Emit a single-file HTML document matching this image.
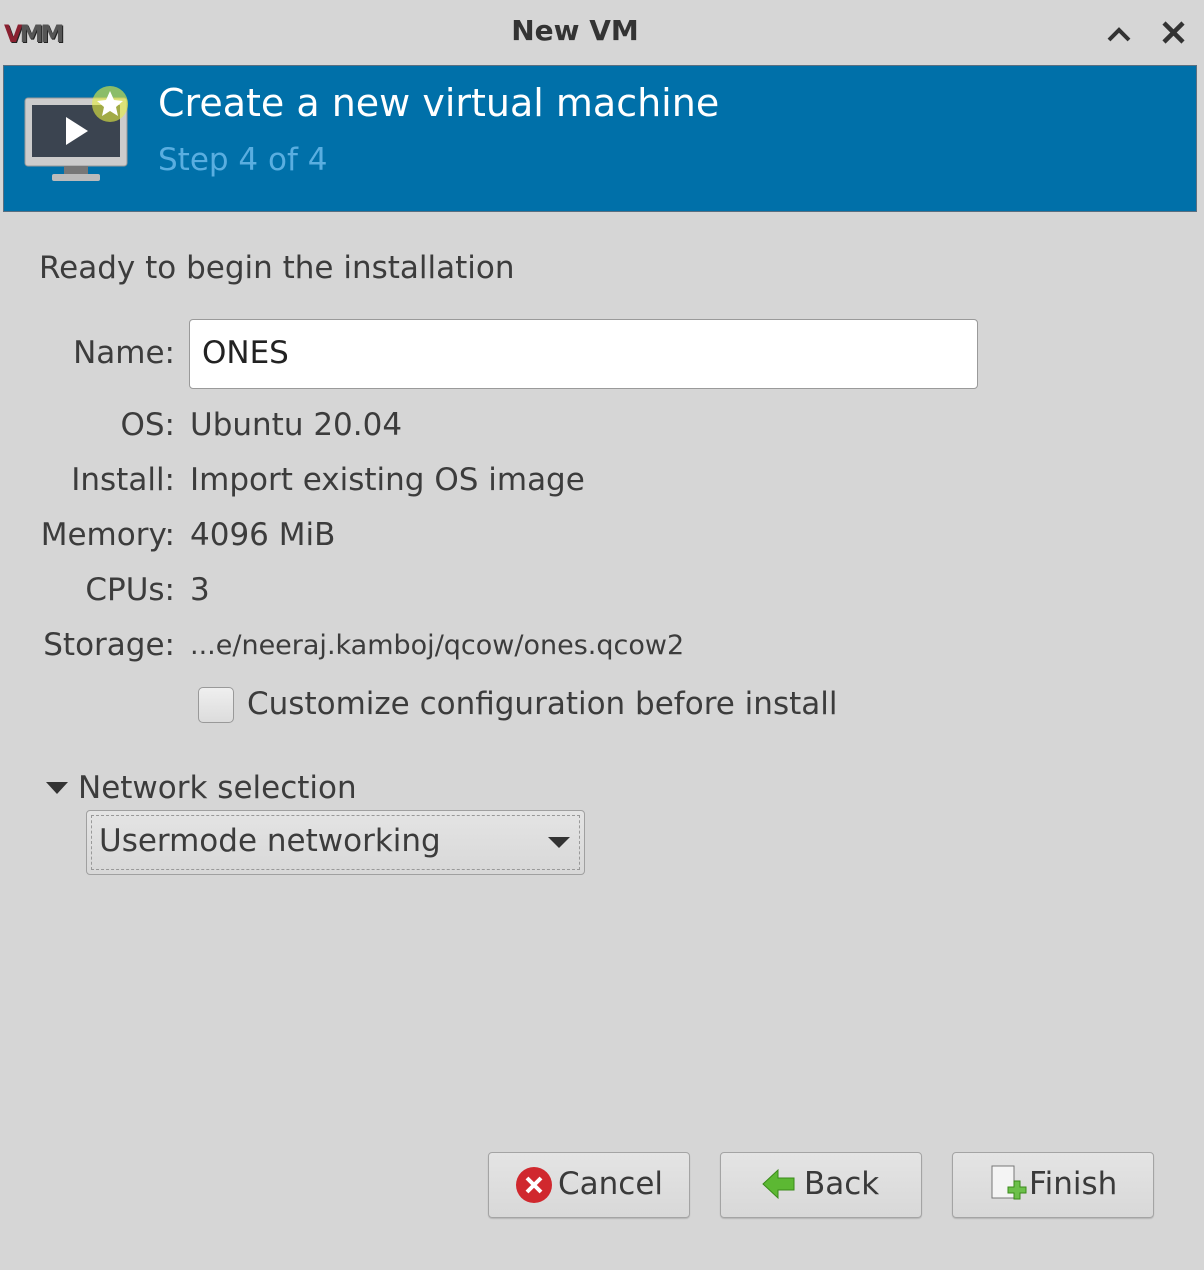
<!DOCTYPE html>
<html><head><meta charset="utf-8"><style>
html,body{margin:0;padding:0;}
body{width:1204px;height:1270px;background:#d6d6d6;position:relative;overflow:hidden;font-family:"DejaVu Sans","Liberation Sans",sans-serif;color:#3c3c3c;}
.a{position:absolute;white-space:nowrap;}
.lbl{position:absolute;right:1029px;white-space:nowrap;font-size:31px;line-height:36px;}
.val{position:absolute;left:190px;white-space:nowrap;font-size:31px;line-height:36px;}
.btn{position:absolute;top:1152px;width:200px;height:64px;border:1px solid #a4a4a4;border-radius:4px;background:linear-gradient(#e4e4e4,#d8d8d8);box-shadow:0 1px 1px rgba(0,0,0,.15);font-size:31px;line-height:62px;color:#3a3a3a;}
</style></head><body>
<div class="a" style="left:4px;top:20px;font-size:24px;font-weight:bold;color:#555;letter-spacing:-3px;text-shadow:1px 1px 0 #222;"><span style="color:#8a2030">V</span>MM</div>
<div class="a" style="left:0;width:1150px;top:14px;text-align:center;font-size:28px;font-weight:bold;color:#333;">New VM</div>
<svg class="a" style="left:1106px;top:24px" width="26" height="20"><path d="M3 16 L13 6 L23 16" stroke="#333" stroke-width="4" fill="none"/></svg>
<svg class="a" style="left:1161px;top:20px" width="26" height="26"><path d="M3 3 L22 22 M22 3 L3 22" stroke="#333" stroke-width="4.5"/></svg>
<div class="a" style="left:3px;top:65px;width:1192px;height:145px;background:#0070a9;border:1px solid #5a6f80;"></div>
<svg class="a" style="left:22px;top:82px" width="110" height="102">
<rect x="3" y="16" width="102" height="68" rx="3" fill="#ccc" stroke="#999"/>
<rect x="10" y="23" width="88" height="52" fill="#3b4450"/>
<path d="M44 35 L66 49 L44 63 Z" fill="#fff"/>
<rect x="42" y="84" width="24" height="8" fill="#777"/>
<rect x="30" y="92" width="48" height="7" rx="2" fill="#bbb"/>
<circle cx="88" cy="22" r="18" fill="#e8f040" opacity=".6"/>
<path d="M88 9 L92 18 L101 19 L94 25 L96 34 L88 29 L80 34 L82 25 L75 19 L84 18 Z" fill="#fff"/>
</svg>
<div class="a" style="left:158px;top:81px;font-size:38px;color:#fff;">Create a new virtual machine</div>
<div class="a" style="left:158px;top:142px;font-size:31px;color:#5aaee0;">Step 4 of 4</div>
<div class="a" style="left:39px;top:250px;font-size:31px;">Ready to begin the installation</div>
<div class="lbl" style="top:335px">Name:</div>
<div class="a" style="left:189px;top:319px;width:787px;height:68px;background:#fff;border:1px solid #9a9a9a;border-radius:4px;"></div>
<div class="a" style="left:202px;top:335px;font-size:31px;line-height:36px;color:#222;">ONES</div>
<div class="lbl" style="top:407px">OS:</div><div class="val" style="top:407px">Ubuntu 20.04</div>
<div class="lbl" style="top:462px">Install:</div><div class="val" style="top:462px">Import existing OS image</div>
<div class="lbl" style="top:517px">Memory:</div><div class="val" style="top:517px">4096 MiB</div>
<div class="lbl" style="top:572px">CPUs:</div><div class="val" style="top:572px">3</div>
<div class="lbl" style="top:627px">Storage:</div><div class="val" style="top:628px;font-size:27px;">...e/neeraj.kamboj/qcow/ones.qcow2</div>
<div class="a" style="left:198px;top:687px;width:34px;height:34px;border:1px solid #999;border-radius:5px;background:linear-gradient(#efefef,#dcdcdc);"></div>
<div class="a" style="left:247px;top:686px;font-size:31px;line-height:36px;">Customize configuration before install</div>
<svg class="a" style="left:46px;top:782px" width="24" height="14"><path d="M0 0 L22 0 L11 12 Z" fill="#333"/></svg>
<div class="a" style="left:78px;top:770px;font-size:31px;line-height:36px;">Network selection</div>
<div class="a" style="left:86px;top:810px;width:497px;height:63px;border:1px solid #a0a0a0;border-radius:4px;background:linear-gradient(#e4e4e4,#d8d8d8);"></div>
<div class="a" style="left:91px;top:815px;width:487px;height:53px;border:1px dashed #999;"></div>
<div class="a" style="left:99px;top:823px;font-size:31px;line-height:36px;">Usermode networking</div>
<svg class="a" style="left:548px;top:837px" width="24" height="14"><path d="M0 0 L22 0 L11 11 Z" fill="#333"/></svg>
<div class="btn" style="left:488px;">
<svg style="position:absolute;left:26px;top:13px" width="38" height="38"><circle cx="19" cy="19" r="18" fill="#d0282e"/><path d="M12 12 L26 26 M26 12 L12 26" stroke="#fff" stroke-width="4"/></svg>
<span style="position:absolute;left:69px;">Cancel</span></div>
<div class="btn" style="left:720px;">
<svg style="position:absolute;left:40px;top:14px" width="36" height="34"><path d="M2 17 L17 3 L17 11 L33 11 L33 23 L17 23 L17 31 Z" fill="#5cb833" stroke="#3a8a1a"/></svg>
<span style="position:absolute;left:83px;">Back</span></div>
<div class="btn" style="left:952px;">
<svg style="position:absolute;left:37px;top:12px" width="40" height="42"><rect x="2" y="1" width="22" height="32" fill="#f4f4f4" stroke="#777"/><path d="M18 22 h6 v-6 h6 v6 h6 v6 h-6 v6 h-6 v-6 h-6 Z" fill="#6cc04a" stroke="#3a8a1a"/></svg>
<span style="position:absolute;left:76px;">Finish</span></div>
</body></html>
